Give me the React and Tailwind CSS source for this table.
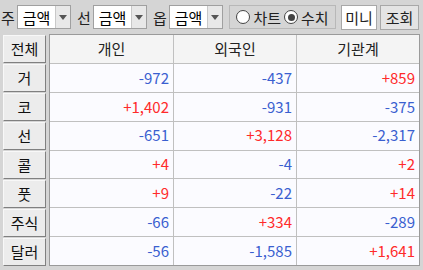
const font = { fontFamily: '"Noto Sans CJK KR", "Liberation Sans", sans-serif' };

const rows = [
  { label: "거", v: ["-972", "-437", "+859"] },
  { label: "코", v: ["+1,402", "-931", "-375"] },
  { label: "선", v: ["-651", "+3,128", "-2,317"] },
  { label: "콜", v: ["+4", "-4", "+2"] },
  { label: "풋", v: ["+9", "-22", "+14"] },
  { label: "주식", v: ["-66", "+334", "-289"] },
  { label: "달러", v: ["-56", "-1,585", "+1,641"] },
];

function Combo({ label }) {
  return (
    <div className="flex items-center">
      <span className="w-[16px] text-[15px] text-[#222] leading-none">{label}</span>
      <div className="flex h-[24px] border border-[#a0a0a0] bg-white">
        <div className="w-[37px] flex items-center justify-center text-[15px] text-black leading-none">금액</div>
        <div className="w-[15px] flex items-center justify-center bg-[#e8e8e8] border-l border-[#c8c8c8]">
          <svg width="8" height="5" viewBox="0 0 8 5"><path d="M0 0h8L4 5z" fill="#555" /></svg>
        </div>
      </div>
    </div>
  );
}

function Radio({ on }) {
  return (
    <span className="w-[14px] h-[14px] rounded-full border border-[#444] bg-white flex items-center justify-center">
      {on && <span className="w-[7px] h-[7px] rounded-full bg-[#444]" />}
    </span>
  );
}

function Cell({ v }) {
  const pos = v.startsWith("+");
  return (
    <div className={`flex items-center justify-end pr-[4px] text-[15px] border-l border-[#c0c0c0] first:border-l-0 ${pos ? "text-[#ff2a2a]" : "text-[#3a5fd0]"}`}>
      {v}
    </div>
  );
}

export default function App() {
  return (
    <div className="w-[423px] h-[270px] bg-[#d5d5d5] flex flex-col" style={font}>
      <div className="h-[34px] flex items-center pl-[1px] gap-[6px]">
        <Combo label="주" />
        <Combo label="선" />
        <Combo label="옵" />
        <div className="flex items-center justify-center gap-[3px] h-[24px] w-[107px] border border-[#b8b8b8] text-[15px] text-[#222] leading-none">
          <Radio />
          <span>차트</span>
          <Radio on />
          <span>수치</span>
        </div>
        <div className="h-[25px] w-[36px] ml-[-1px] flex items-center justify-center bg-white border border-[#a8a8a8] text-[15px] text-[#222] leading-none">미니</div>
        <div className="h-[25px] w-[39px] ml-[-3px] flex items-center justify-center bg-[#e4e4e4] border border-[#a8a8a8] text-[15px] text-[#222] leading-none">조회</div>
      </div>
      <div className="flex-1 flex px-[3px] pb-[4px] gap-[3px]">
        <div className="w-[43px] flex flex-col gap-[1px] pt-[1px]">
          <div className="h-[28px] flex items-center justify-center bg-[#ececec] border border-[#f8f8f8] border-r-[#808080] border-b-[#808080] text-[15px] text-[#111]">전체</div>
          {rows.map((r) => (
            <div key={r.label} className="h-[28px] flex items-center justify-center bg-[#ececec] border border-[#f8f8f8] border-r-[#808080] border-b-[#808080] text-[15px] text-[#111]">{r.label}</div>
          ))}
        </div>
        <div className="flex-1 flex flex-col border border-[#9a9a9a] bg-[#fbfbff]">
          <div className="h-[29px] grid grid-cols-3 bg-[#f4f4f4] border-b border-[#c0c0c0] text-[15px] text-[#222]">
            <div className="flex items-center justify-center">개인</div>
            <div className="flex items-center justify-center border-l border-[#c0c0c0]">외국인</div>
            <div className="flex items-center justify-center border-l border-[#c0c0c0]">기관계</div>
          </div>
          {rows.map((r, i) => (
            <div key={r.label} className={`flex-1 grid grid-cols-3 ${i < rows.length - 1 ? "border-b border-[#c0c0c0]" : ""}`}>
              {r.v.map((v, j) => <Cell key={j} v={v} />)}
            </div>
          ))}
        </div>
      </div>
    </div>
  );
}
